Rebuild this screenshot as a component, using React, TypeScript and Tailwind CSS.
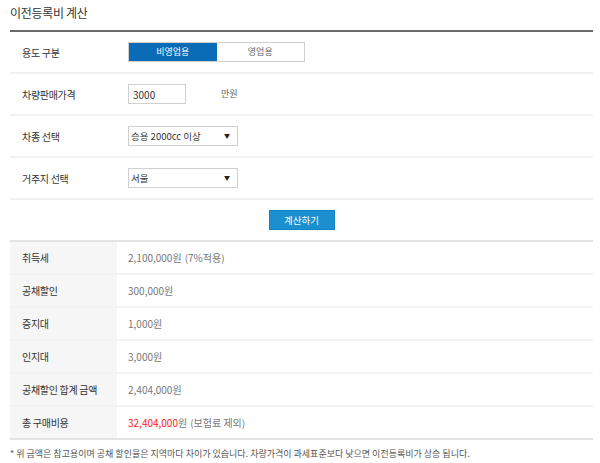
import { useState } from 'react';

const font = { fontFamily: '"Noto Sans CJK KR", "Noto Sans", sans-serif' };

const results = [
  { label: '취득세', value: '2,100,000원', note: '(7%적용)' },
  { label: '공채할인', value: '300,000원' },
  { label: '증지대', value: '1,000원' },
  { label: '인지대', value: '3,000원' },
  { label: '공채할인 합계 금액', value: '2,404,000원' },
];

const Caret = () => <span className="absolute right-[7px] top-[0px] text-[6px] text-[#222]">▼</span>;

export default function App() {
  const [use, setUse] = useState('비영업용');

  return (
    <div className="w-[600px] h-[463px] bg-white px-[10px] pt-[4px] text-[#333]" style={font}>
      <h2 className="text-[12px] leading-[18px] h-[26px] tracking-[-0.3px]">이전등록비 계산</h2>
      <div className="w-[583px] border-t-2 border-[#6b6b6b]">
        <div className="flex items-center h-[42px] border-b-2 border-[#f1f1f1]">
          <div className="w-[118px] pl-[12px] text-[10px] tracking-[-0.3px]">용도 구분</div>
          <div className="flex w-[177px] h-[20px] border border-[#d0d0d0]">
            {['비영업용', '영업용'].map(v => (
              <button
                key={v}
                onClick={() => setUse(v)}
                className={
                  use === v
                    ? 'flex-1 bg-[#0a6cb6] text-white text-[9px] leading-[18px]'
                    : 'flex-1 bg-white text-[#666] text-[9px] leading-[18px]'
                }
              >
                {v}
              </button>
            ))}
          </div>
        </div>
        <div className="flex items-center h-[42px] border-b-2 border-[#f1f1f1]">
          <div className="w-[118px] pl-[12px] text-[10px] tracking-[-0.3px]">차량판매가격</div>
          <input
            defaultValue="3000"
            className="w-[58px] h-[20px] border border-[#d0d0d0] px-[4px] text-[10px] outline-none"
          />
          <span className="ml-[35px] text-[9px] text-[#666]">만원</span>
        </div>
        <div className="flex items-center h-[42px] border-b-2 border-[#f1f1f1]">
          <div className="w-[118px] pl-[12px] text-[10px] tracking-[-0.3px]">차종 선택</div>
          <div className="relative w-[110px] h-[20px] border border-[#d0d0d0] pl-[2px] text-[9.5px] leading-[18px]">
            승용 2000cc 이상
            <Caret />
          </div>
        </div>
        <div className="flex items-center h-[42px] border-b-2 border-[#f1f1f1]">
          <div className="w-[118px] pl-[12px] text-[10px] tracking-[-0.3px]">거주지 선택</div>
          <div className="relative w-[110px] h-[20px] border border-[#d0d0d0] pl-[2px] text-[9.5px] leading-[18px]">
            서울
            <Caret />
          </div>
        </div>
        <div className="flex items-center justify-center h-[42px] border-b-2 border-[#e4e4e4]">
          <button className="w-[66px] h-[20px] bg-[#1b90d0] border border-[#1483c2] text-white text-[9.5px] leading-[18px]">
            계산하기
          </button>
        </div>
        {results.map(r => (
          <div key={r.label} className="flex h-[33px] border-b-2 border-[#f3f3f3]">
            <div className="w-[107px] bg-[#f6f6f6] pl-[12px] pb-[1px] flex items-center text-[10px] tracking-[-0.3px]">{r.label}</div>
            <div className="pl-[11px] pb-[1px] flex items-center text-[10px] text-[#777]">
              {r.value}
              {r.note && <span className="ml-[3px]">{r.note}</span>}
            </div>
          </div>
        ))}
        <div className="flex h-[33px] border-b-2 border-[#e4e4e4]">
          <div className="w-[107px] bg-[#f6f6f6] pl-[12px] pb-[1px] flex items-center text-[10px] tracking-[-0.3px]">총 구매비용</div>
          <div className="pl-[11px] pb-[1px] flex items-center text-[10px] text-[#777]">
            <span className="text-[#ff2020]">32,404,000</span>원
            <span className="ml-[3px]">(보험료 제외)</span>
          </div>
        </div>
      </div>
      <p className="mt-[7px] text-[9px] text-[#555]">
        * 위 금액은 참고용이며 공채 할인율은 지역마다 차이가 있습니다. 차량가격이 과세표준보다 낮으면 이전등록비가 상승 됩니다.
      </p>
    </div>
  );
}
